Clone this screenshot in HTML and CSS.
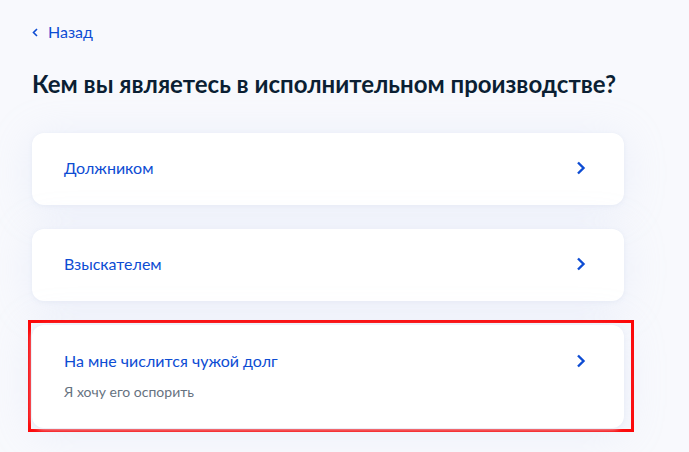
FILE: index.html
```html
<!DOCTYPE html>
<html lang="ru">

<head>
    <meta charset="UTF-8">
    <meta name="viewport" content="width=device-width, initial-scale=1.0">
    <title>Исполнительное производство</title>
    <link rel="stylesheet" href="styles.css">
</head>

<body>
    <div class="page">
        <!-- Back link -->
        <a class="back" href="#">
            <svg class="back-icon" width="6" height="9" viewBox="0 0 6 9">
                <path d="M5 1 L1.5 4.5 L5 8" fill="none" stroke="#0d4cd3" stroke-width="1.6" />
            </svg>
            Назад
        </a>

        <h1 class="title">Кем вы являетесь в исполнительном производстве?</h1>

        <!-- Choice list -->
        <div class="choices">
            <a class="choice" href="#">
                <div class="choice-text">
                    <div class="choice-name">Должником</div>
                </div>
                <svg class="chevron" width="10" height="14" viewBox="0 0 10 14">
                    <path d="M2 1.5 L7.5 7 L2 12.5" fill="none" stroke="#0d4cd3" stroke-width="2.4" />
                </svg>
            </a>

            <a class="choice" href="#">
                <div class="choice-text">
                    <div class="choice-name">Взыскателем</div>
                </div>
                <svg class="chevron" width="10" height="14" viewBox="0 0 10 14">
                    <path d="M2 1.5 L7.5 7 L2 12.5" fill="none" stroke="#0d4cd3" stroke-width="2.4" />
                </svg>
            </a>

            <div class="marked">
                <a class="choice tall" href="#">
                    <div class="choice-text">
                        <div class="choice-name">На мне числится чужой долг</div>
                        <div class="choice-hint">Я хочу его оспорить</div>
                    </div>
                    <svg class="chevron" width="10" height="14" viewBox="0 0 10 14">
                        <path d="M2 1.5 L7.5 7 L2 12.5" fill="none" stroke="#0d4cd3" stroke-width="2.4" />
                    </svg>
                </a>
            </div>
        </div>
    </div>
</body>

</html>
```

FILE: styles.css
```css
/* Choice page */
html,
body {
    margin: 0;
    padding: 0;
    background: #f8f9fd;
    font-family: Lato, 'Noto Sans', Arial, sans-serif;
    color: #0b1f33;
}

.page {
    width: 592px;
    padding: 20px 0 20px 32px;
}

.back {
    display: inline-flex;
    align-items: center;
    gap: 10px;
    font-size: 16px;
    line-height: 24px;
    color: #0d4cd3;
    text-decoration: none;
}

.back-icon {
    margin-top: 1px;
}

.title {
    margin: 24px 0 33px 0;
    font-size: 24px;
    line-height: 32px;
    font-weight: 700;
    color: #0b1f33;
}

.choices {
    display: flex;
    flex-direction: column;
    gap: 24px;
}

.choice {
    display: flex;
    align-items: center;
    justify-content: space-between;
    padding: 23px 38px 25px 32px;
    background: #fff;
    border-radius: 12px;
    box-shadow: 0 1px 4px rgba(229, 234, 245, .9), 0 4px 40px rgba(200, 212, 240, .25);
    text-decoration: none;
}

.choice.tall {
    align-items: flex-start;
    padding: 24px 38px 26px 32px;
}

.choice.tall .chevron {
    margin-top: 5px;
}

.choice-name {
    font-size: 16px;
    line-height: 24px;
    color: #0d4cd3;
}

.choice-hint {
    margin-top: 9px;
    font-size: 14px;
    line-height: 20px;
    color: #66727f;
}

/* red highlight around the last option */
.marked {
    margin: -5px -10px 0 -4px;
    padding: 2px 7px 1px 1px;
    border: 3px solid #ff0000;
}
```
